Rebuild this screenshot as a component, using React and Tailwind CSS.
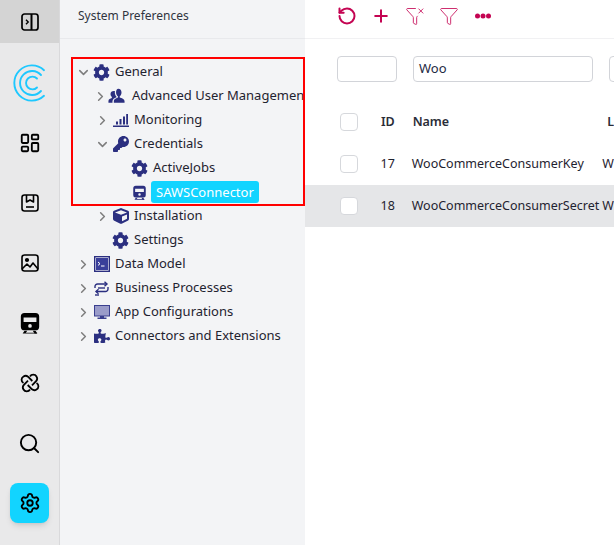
import React from "react";
import { LayoutDashboard, Image, Search, Settings, RotateCcw, Plus, Filter, FilterX, ChevronRight, ChevronDown } from "lucide-react";
import { FaCog, FaKey, FaCube, FaPuzzlePiece, FaDesktop } from "react-icons/fa";

const NAVY = "#2b2f80";

const Toggle = () => (
  <svg width="20" height="20" viewBox="0 0 20 20" fill="none" stroke="#000" strokeWidth="1.7">
    <rect x="2" y="2" width="16" height="16" rx="2.5" />
    <path d="M11.5 2v16" strokeWidth="2" />
    <path d="M6 7.8l2.2 2.2L6 12.2" strokeWidth="1.4" />
  </svg>
);
const Logo = () => (
  <svg width="34" height="38" viewBox="0 0 34 38" fill="none" stroke="#1ec8ff" strokeWidth="1.9" strokeLinecap="round">
    <path d="M31 6.2A17.6 17.6 0 1 0 31 31.8" />
    <path d="M28 11A12 12 0 1 0 28 27" />
    <path d="M24 14.5A6.4 6.4 0 1 0 24 23.5" />
  </svg>
);
const Book = () => (
  <svg width="20" height="20" viewBox="0 0 20 20" fill="none" stroke="#000" strokeWidth="1.6" strokeLinejoin="round">
    <rect x="2" y="2" width="16" height="16" rx="2.5" />
    <path d="M6.5 2v7l3.5-2 3.500 2V2" />
    <path d="M6 14h8" />
  </svg>
);
const RailImage = () => (
  <svg width="20" height="20" viewBox="0 0 20 20" fill="none" stroke="#000" strokeWidth="1.6" strokeLinejoin="round">
    <rect x="2" y="2" width="16" height="16" rx="2.5" />
    <circle cx="7" cy="7" r="1.3" fill="#000" />
    <path d="M2 16l5-5 3 3 3-4 5 6" />
  </svg>
);
const TrainFilled = ({ size = 22, color = "#000" }) => (
  <svg width={size} height={size} viewBox="0 0 22 24" fill={color}>
    <path fillRule="evenodd" d="M5 1h12a4 4 0 0 1 4 4v11a4 4 0 0 1-4 4H5a4 4 0 0 1-4-4V5a4 4 0 0 1 4-4zM4 6v5h14V6zM11 13.200a2 2 0 1 0 0 4 2 2 0 0 0 0-4z" />
    <path d="M5 20.500h3L6.500 22.500H19l-1 1H3z" />
    <path d="M14 20.500h3l2 3h-3z" />
  </svg>
);
const Conn = () => (
  <svg width="22" height="22" viewBox="0 0 22 22" fill="none" stroke="#000" strokeWidth="1.8">
    <path d="M11 4.500a3.700 3.700 0 0 1 6.500 0c1 1.500.8 3.200-.2 4.500L13 13.300" />
    <path d="M17.500 11a3.700 3.700 0 0 1 0 6.500c-1.500 1-3.200.8-4.500-.2L8.700 13" />
    <path d="M11 17.500a3.700 3.700 0 0 1-6.500 0c-1-1.500-.8-3.200.2-4.500L9 8.700" />
    <path d="M4.500 11a3.700 3.700 0 0 1 0-6.500c1.500-1 3.200-.8 4.500.2L13.300 9" />
  </svg>
);
const Users = () => (
  <svg width="19" height="18" viewBox="0 0 19 18" fill={NAVY}>
    <path d="M11.500 1c2.300 0 3.600 1.700 3.600 4 0 1.900-.9 3.500-2 4.300v1.400c2 .7 5.400 1.500 5.400 4.300v1.500H6.500V15c0-2.600 3-3.500 4.600-4.300V9.300c-1.100-.8-2.100-2.400-2.100-4.300 0-2.300 1-4 2.500-4z" />
    <path d="M6.500 3.500c.5 0 1 .1 1.300.3-.5 2 .1 4.500 1.700 6v.500C7 11.200 5 12.400 5 15v1.500H.5v-2c0-2 2.200-2.700 3.800-3.300V10C3.300 9.200 2.800 8 2.800 6.700c0-1.900 1.500-3.200 3.700-3.200z" />
  </svg>
);
const Bars = () => (
  <svg width="16" height="14" viewBox="0 0 16 14" fill={NAVY}>
    <path d="M0 12.500h16V14H0z" />
    <path d="M3 8.500h2v3H3zM6.500 6h2v5.500h-2zM10 3.500h2v8h-2zM13.200 1h1.800v10.500h-1.800z" />
  </svg>
);
const Term = () => (
  <svg width="16" height="16" viewBox="0 0 16 16">
    <rect x="0.700" y="0.700" width="14.600" height="14.600" fill="#fff" stroke={NAVY} strokeWidth="1.400" />
    <rect x="2" y="2" width="12" height="12" fill="#3a3f9a" />
    <path d="M4 6l2 1.700L4 9.400" stroke="#fff" fill="none" strokeWidth="1" />
    <path d="M7 10h3.500" stroke="#fff" strokeWidth="1" />
  </svg>
);
const Flow = () => (
  <svg width="15" height="15" viewBox="0 0 15 15" fill="none" stroke={NAVY} strokeWidth="1.400">
    <path d="M1 7V5.500a2.500 2.500 0 0 1 2.500-2.500H13" />
    <path d="M10.500 .8L13 3l-2.500 2.200" />
    <path d="M14 6v2a2.500 2.500 0 0 1-2.500 2.500H2" />
    <path d="M4.500 8.300L2 10.500l2.500 2.200" />
    <path d="M4 7h7" />
    <path d="M1 14h4" />
  </svg>
);
const Monitor = () => (
  <svg width="16" height="15" viewBox="0 0 16 15">
    <rect x="0.500" y="0.500" width="15" height="10.500" fill="#9a9cc9" stroke="#3a3f8f" />
    <path d="M6 11h4v1.500h2.500V14h-9v-1.500H6z" fill="#3a3f8f" />
  </svg>
);

const Chev = ({ open }) => open
  ? <ChevronDown size={15} strokeWidth={2.4} color="#7d7d7d" />
  : <ChevronRight size={15} strokeWidth={2.4} color="#7d7d7d" />;

const Row = ({ level = 0, chev, icon, children, gap = "ml-[5px]" }) => (
  <div className="flex h-6 items-center" style={{ paddingLeft: 14 + level * 19 }}>
    <span className="flex w-[19px] justify-center">{chev ? <Chev open={chev === "open"} /> : null}</span>
    <span className="flex w-[17px] justify-center">{icon}</span>
    <span className={`${gap} whitespace-nowrap`}>{children}</span>
  </div>
);

const RailItem = ({ children }) => <div className="flex h-[60px] w-full items-center justify-center">{children}</div>;

const Head = ({ children, className }) => <div className={className}>{children}</div>;
const Check = () => <div className="h-[18px] w-[18px] rounded-[4px] border border-[#d6d8dc] bg-white" />;

export default function App() {
  return (
    <div className="relative flex h-[545px] w-[614px] overflow-hidden bg-white text-[13px] text-[#1f2330]" style={{ fontFamily: '"Noto Sans", "Open Sans", sans-serif' }}>
      <aside className="flex w-[60px] shrink-0 flex-col items-center border-r border-[#d9d9db] bg-[#e9e9ea]">
        <div className="flex h-[43px] w-full items-center justify-center bg-[#d4d4d4]"><Toggle /></div>
        <div className="h-[10px]" />
        <RailItem><Logo /></RailItem>
        <RailItem><LayoutDashboard size={22} strokeWidth={2} color="#000" /></RailItem>
        <RailItem><Book /></RailItem>
        <RailItem><RailImage /></RailItem>
        <RailItem><TrainFilled /></RailItem>
        <RailItem><Conn /></RailItem>
        <RailItem><Search size={23} strokeWidth={2} color="#000" /></RailItem>
        <RailItem>
          <div className="flex h-10 w-[39px] items-center justify-center rounded-lg bg-[#12d4ff] shadow-md"><Settings size={22} strokeWidth={2} color="#000" /></div>
        </RailItem>
      </aside>

      <nav className="w-[245px] shrink-0 bg-[#f3f4f6]">
        <div className="flex h-[39px] items-center border-b border-[#e8e9ec] pb-[6px] pl-[18px] text-[12px] text-[#30343f]">System Preferences</div>
        <div className="pt-[21px]">
          <Row chev="open" icon={<FaCog size={17} color={NAVY} />}>General</Row>
          <Row level={1} chev="closed" icon={<Users />} gap="ml-[7px]">Advanced User Management</Row>
          <Row level={1} chev="closed" icon={<Bars />}>Monitoring</Row>
          <Row level={1} chev="open" icon={<FaKey size={16} color={NAVY} />}>Credentials</Row>
          <Row level={2} icon={<FaCog size={17} color={NAVY} />}>ActiveJobs</Row>
          <div className="flex h-6 items-center pl-[71px]">
            <span className="flex w-[17px] justify-center"><TrainFilled size={15} color={NAVY} /></span>
            <span className="ml-[3px] rounded-[3px] bg-[#12d4ff] px-[5px] py-[1px] leading-5 text-white">SAWSConnector</span>
          </div>
          <Row level={1} chev="closed" icon={<FaCube size={16} color={NAVY} />}>Installation</Row>
          <Row level={1} icon={<FaCog size={17} color={NAVY} />}>Settings</Row>
          <Row chev="closed" icon={<Term />}>Data Model</Row>
          <Row chev="closed" icon={<Flow />}>Business Processes</Row>
          <Row chev="closed" icon={<Monitor />}>App Configurations</Row>
          <Row chev="closed" icon={<FaPuzzlePiece size={16} color={NAVY} />}>Connectors and Extensions</Row>
        </div>
      </nav>

      <main className="min-w-0 flex-1 overflow-hidden bg-white">
        <div className="flex h-[39px] items-center gap-[14px] border-b border-[#f1f1f3] pb-[6px] pl-[32px]">
          <RotateCcw size={20} strokeWidth={2.4} color="#c40452" />
          <Plus size={20} strokeWidth={2.4} color="#c40452" />
          <FilterX size={20} strokeWidth={1} color="#c40452" />
          <Filter size={20} strokeWidth={1} color="#c40452" />
          <svg width="20" height="20" viewBox="0 0 20 20" fill="#c40452"><circle cx="4.500" cy="10" r="2.500" /><circle cx="10" cy="10" r="2.500" /><circle cx="15.500" cy="10" r="2.500" /></svg>
        </div>
        <div className="flex gap-4 pl-[32px] pt-[17px]">
          <div className="h-[26px] w-[60px] shrink-0 rounded border border-[#d2d4d9]" />
          <div className="flex h-[26px] w-[180px] shrink-0 items-center rounded border border-[#d2d4d9] pl-[5px] text-[#1f2a44]">Woo</div>
          <div className="h-[26px] w-[60px] shrink-0 rounded border border-[#d2d4d9]" />
        </div>
        <div className="mt-[19px] whitespace-nowrap">
          <div className="flex h-[42px] items-center pl-[35px] font-semibold text-[12.500px] text-[#2a2d38]">
            <Check />
            <Head className="ml-[23px] w-[32px]">ID</Head>
            <Head className="w-[196px]">Name</Head>
            <Head>L</Head>
          </div>
          <div className="flex h-[42px] items-center pl-[35px] text-[12.500px]">
            <Check />
            <div className="ml-[23px] w-[32px]">17</div>
            <div className="w-[196px]">WooCommerceConsumerKey</div>
            <div>W</div>
          </div>
          <div className="flex h-[42px] items-center bg-[#e5e6e8] pl-[35px] text-[12.500px]">
            <Check />
            <div className="ml-[23px] w-[32px]">18</div>
            <div className="w-[196px]">WooCommerceConsumerSecret</div>
            <div>W</div>
          </div>
        </div>
      </main>

      <div className="pointer-events-none absolute left-[71px] top-[57px] h-[149px] w-[234px] border-2 border-[#ff0000]" />
    </div>
  );
}
